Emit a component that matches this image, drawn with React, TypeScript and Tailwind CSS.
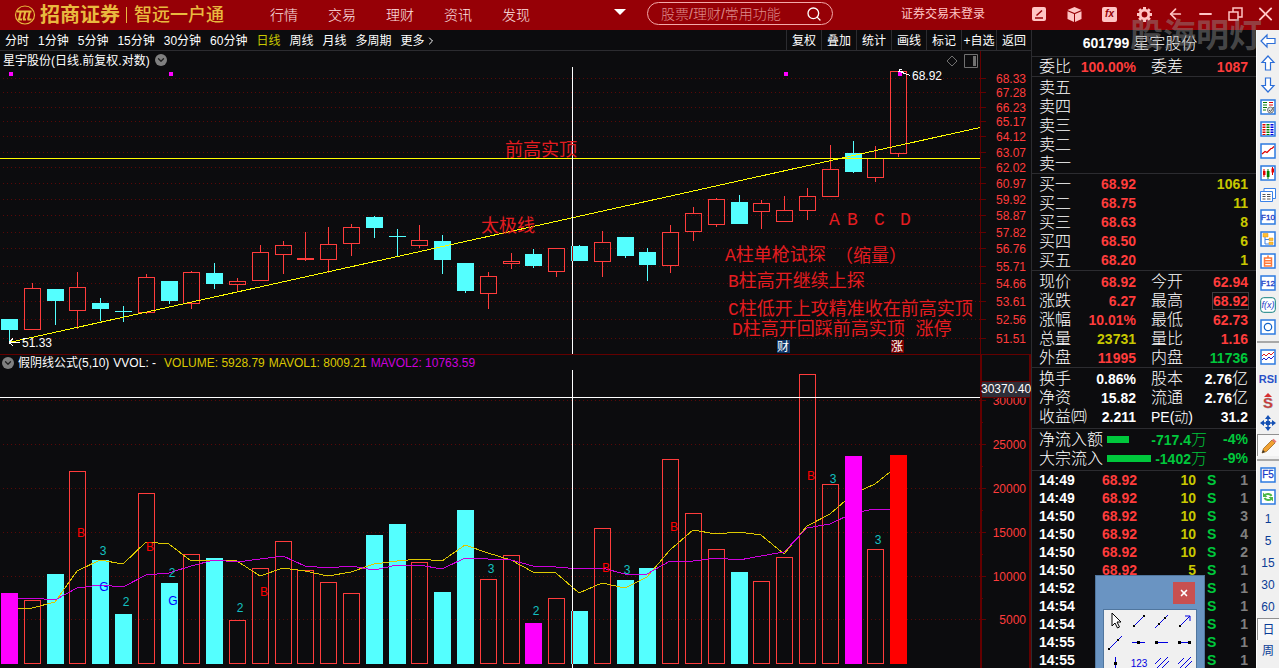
import * as React from "react";
import { Search, ArrowLeft, Minus, X, ChevronDown, ChevronRight } from "lucide-react";

type Candle = [number, number, number, number, boolean];

// high, body top, body bottom, low, rising
const candles: Candle[] = [
  [319, 319, 330, 342, false],
  [283, 288, 330, 330, true],
  [289, 289, 301, 325, false],
  [272, 287, 311, 329, true],
  [298, 303, 309, 321, false],
  [306, 311, 312, 322, false],
  [274, 277, 313, 314, true],
  [281, 281, 301, 304, false],
  [271, 272, 304, 309, true],
  [263, 273, 284, 289, false],
  [278, 281, 285, 291, true],
  [245, 252, 281, 281, true],
  [241, 245, 255, 274, true],
  [232, 258, 260, 261, true],
  [227, 244, 260, 273, true],
  [224, 227, 244, 256, true],
  [216, 217, 228, 238, false],
  [229, 236, 237, 257, false],
  [225, 240, 246, 248, true],
  [235, 241, 260, 274, false],
  [263, 263, 291, 293, false],
  [272, 276, 294, 309, true],
  [253, 261, 264, 269, true],
  [249, 254, 266, 268, false],
  [248, 248, 272, 277, true],
  [245, 246, 261, 261, false],
  [231, 242, 262, 277, true],
  [237, 237, 256, 258, false],
  [248, 252, 265, 281, false],
  [225, 232, 266, 273, true],
  [207, 213, 232, 241, true],
  [198, 199, 225, 227, true],
  [195, 202, 224, 224, false],
  [200, 203, 212, 229, true],
  [196, 210, 222, 222, true],
  [188, 196, 211, 220, true],
  [145, 169, 197, 197, true],
  [141, 153, 172, 173, false],
  [146, 158, 178, 182, true],
  [71, 71, 154, 157, true],
];

const volumes = [
  593, 600, 574, 471, 560, 614, 493, 583, 554, 558, 620, 568, 541, 570, 582, 593, 535, 524, 562, 592,
  510, 579, 555, 623, 598, 611, 528, 580, 568, 459, 513, 549, 572, 581, 557, 374, 484, 456, 549, 455,
];
const volumeFill: Record<number, string> = { 0: "#ff00ff", 23: "#ff00ff", 37: "#ff00ff", 39: "#ff0000" };

const ma1 = [
  608, 602, 571, 560, 564, 542, 544, 561, 560, 561, 576, 568, 571, 576, 572, 564, 561, 559, 561, 545,
  553, 560, 572, 573, 593, 583, 588, 577, 550, 530, 534, 532, 535, 554, 526, 514, 494, 484,
];
const ma2 = [
  598, 600, 588, 585, 587, 575, 573, 566, 560, 562, 559, 556, 566, 568, 566, 570, 565, 565, 569, 558,
  559, 560, 566, 567, 569, 568, 574, 574, 561, 561, 558, 560, 556, 552, 528, 524, 513, 509,
];

const priceAxis: [number, string][] = [
  [78, "68.33"], [92, "67.28"], [107, "66.23"], [121, "65.17"], [136, "64.12"], [152, "63.07"],
  [167, "62.02"], [183, "60.97"], [199, "59.92"], [215, "58.87"], [232, "57.82"], [248, "56.76"],
  [266, "55.71"], [283, "54.66"], [301, "53.61"], [319, "52.56"], [338, "51.51"],
];
const volumeAxis: [number, string][] = [
  [400, "30000"], [444, "25000"], [488, "20000"], [532, "15000"], [576, "10000"], [619, "5000"],
];

const marks: [number, number, string][] = [
  [81, 533, "B"], [103, 551, "3"], [104, 587, "G"], [126, 602, "2"], [150, 547, "B"], [172, 573, "2"],
  [173, 601, "G"], [240, 608, "2"], [264, 592, "B"], [491, 569, "3"], [536, 611, "2"], [606, 568, "B"],
  [627, 570, "3"], [674, 527, "B"], [811, 476, "B"], [833, 479, "3"], [878, 540, "3"],
];
const markColor: Record<string, string> = { B: "#ff0000", G: "#0000ff", "2": "#14c0c0", "3": "#14c0c0" };

const notes: [number, number, string][] = [
  [505, 156, "前高实顶"],
  [481, 232, "太极线"],
  [829, 225, "A"],
  [847, 225, "B"],
  [874, 225, "C"],
  [900, 225, "D"],
  [725, 261, "A柱单枪试探"],
  [835, 262, "（缩量）"],
  [728, 287, "B柱高开继续上探"],
  [728, 315, "C柱低开上攻精准收在前高实顶"],
  [732, 335, "D柱高开回踩前高实顶 涨停"],
];

const candleX = (i: number) => Math.round(1 + 22.8 * i);

const linePoints = (values: number[], first: number, last: number) =>
  [`18,${first}`, ...values.map((y, i) => `${candleX(i + 1) + 8},${y}`), `890,${last}`].join(" ");

const UP = "#ff3c3c";
const DOWN = "#54ffff";
const AXIS = "#640000";

const Header: React.FC = () => (
  <header className="flex h-[30px] shrink-0 items-center bg-[#960006] pl-[14px] pr-[6px] text-[#ffc4c4]">
    <svg className="h-5 w-[22px]" viewBox="0 0 22 20" fill="none" stroke="#e9b93f">
      <ellipse cx="11" cy="10" rx="9.5" ry="9" strokeWidth="1.2" />
      <path d="M3 6.5h14.5M6.8 6.5L5 14.5M11.3 6.5l-1.8 8M15.8 6.5l-1.8 8M4 14.5h4M9 14.5h3M13.5 14.5h4" strokeWidth="2" />
    </svg>
    <span className="ml-1 text-[20px] font-bold leading-6 text-[#e9b93f]">招商证券</span>
    <span className="ml-[6px] h-4 w-px bg-[#e9b93f]" />
    <span className="ml-[7px] text-[18px] font-medium leading-6 text-[#e9b93f]">智远一户通</span>
    <nav className="ml-[46px] flex gap-[30px] text-[14px] font-light text-[#ffe4e4]">
      <a href="#quotes">行情</a>
      <a href="#trade">交易</a>
      <a href="#wealth">理财</a>
      <a href="#news">资讯</a>
      <a href="#discover">发现</a>
    </nav>
    <button aria-label="更多菜单" className="-mt-[6px] ml-[84px]">
      <svg className="h-[6px] w-3" viewBox="0 0 12 6"><path d="M0 0h12L6 6z" fill="#fff" /></svg>
    </button>
    <div className="-mt-[3px] ml-[21px] flex h-[23px] w-[186px] items-center rounded-full border border-[#f3a9a9] pl-[13px] pr-[10px]">
      <input
        aria-label="搜索"
        placeholder="股票/理财/常用功能"
        className="min-w-0 flex-1 bg-transparent text-[14px] font-light leading-5 placeholder:text-[#de8c8c] focus:outline-none"
      />
      <Search className="h-4 w-4 text-white" strokeWidth={2} />
    </div>
    <span className="-mt-[3px] ml-[68px] text-[12px]">证券交易未登录</span>
    <div className="-mt-[2px] ml-auto flex items-center gap-5">
      <button aria-label="编辑">
        <svg className="h-[15px] w-[15px]" viewBox="0 0 15 15">
          <rect width="14" height="14" rx="2" fill="#ffc4c4" />
          <path d="M3 11h8M4.500 8.500L10 3.500" stroke="#960006" strokeWidth="1.500" />
        </svg>
      </button>
      <button aria-label="组件">
        <svg className="h-[15px] w-[15px]" viewBox="0 0 15 15" fill="#ffc4c4">
          <path d="M7.500 0L14.500 3L7.500 6L.5 3zM.5 4.300L7 7v8L.5 12zM14.500 4.300L8 7v8l6.500-3z" />
        </svg>
      </button>
      <button aria-label="公式" className="flex h-[15px] w-[15px] items-center justify-center rounded-[2px] bg-[#ffc4c4] text-[10px] font-bold italic leading-none text-[#960006]">
        fx
      </button>
      <button aria-label="设置">
        <svg className="h-[15px] w-[15px]" viewBox="0 0 15 15" fill="none" stroke="#ffc4c4">
          <circle cx="7.500" cy="7.500" r="4.300" strokeWidth="2.800" />
          <path d="M7.500 0v2.500M7.500 12.500V15M0 7.500h2.500M12.500 7.500H15M2.200 2.200L4 4M11 11l1.800 1.800M12.800 2.200L11 4M4 11l-1.800 1.800" strokeWidth="3" />
        </svg>
      </button>
    </div>
    <div className="-mt-[2px] ml-4 flex items-center gap-[15px]">
      <button aria-label="返回"><ArrowLeft className="h-[18px] w-[15px] scale-110" strokeWidth={2.5} /></button>
      <button aria-label="最小化"><Minus className="h-[18px] w-[15px] scale-125" strokeWidth={2.5} /></button>
      <button aria-label="还原">
        <svg className="h-[15px] w-[15px]" viewBox="0 0 15 15" fill="none" stroke="#ffc4c4" strokeWidth="1.500">
          <path d="M1 5h9v8H1zM5 5V1h9v9h-4" />
        </svg>
      </button>
      <button aria-label="关闭"><X className="h-[20px] w-[15px] scale-150" strokeWidth={2} /></button>
    </div>
  </header>
);

const periods = ["分时", "1分钟", "5分钟", "15分钟", "30分钟", "60分钟", "日线", "周线", "月线", "多周期"];
const tools = ["复权", "叠加", "统计", "画线", "标记", "+自选", "返回"];

const PeriodBar: React.FC = () => (
  <div className="flex h-[21px] items-stretch border-b border-[#2c2c30] text-[12px] text-white">
    <div className="flex items-center gap-[9px] pl-[5px] pt-[2px]">
      {periods.map((p) => (
        <button key={p} className={p === "日线" ? "text-[#c8c800]" : ""}>{p}</button>
      ))}
      <button className="flex items-center">更多<ChevronRight className="h-3 w-3" /></button>
    </div>
    <div className="ml-auto flex">
      {tools.map((t) => (
        <button key={t} className="w-[35px] whitespace-nowrap border-l border-[#2c2c30] pt-[2px]">{t}</button>
      ))}
    </div>
  </div>
);

const RoundToggle: React.FC = () => (
  <button aria-label="展开" className="flex h-3 w-3 items-center justify-center rounded-full bg-[#808080] text-[#202020]">
    <ChevronDown className="h-[10px] w-[10px]" strokeWidth={3} />
  </button>
);

const Grid: React.FC<{ rows: [number, string][] }> = ({ rows }) => (
  <g>
    {rows.map(([y, label]) => (
      <g key={label}>
        <path d={`M3 ${y}.5H980`} stroke="#5a0808" strokeDasharray="1 3" />
        <path d={`M981 ${y}.5h5`} stroke={AXIS} />
        <text x="1026" y={y + 5} textAnchor="end" fill={UP} fontSize="12">{label}</text>
      </g>
    ))}
  </g>
);

const PriceChart: React.FC = () => (
  <svg className="block h-auto w-full" viewBox="0 67 1031 288" shapeRendering="crispEdges">
    <Grid rows={priceAxis} />
    <path d="M980.5 67V355" stroke={AXIS} />
    {candles.map(([high, top, bottom, low, up], i) => {
      const x = candleX(i);
      const color = up ? UP : DOWN;
      return (
        <g key={i} stroke={color}>
          {high < top && <path d={`M${x + 8}.5 ${high}V${top}`} />}
          {low > bottom && <path d={`M${x + 8}.5 ${bottom}V${low}`} />}
          {up ? (
            <rect x={x + 0.5} y={top + 0.5} width="16" height={bottom - top - 1} fill="none" />
          ) : (
            <rect x={x} y={top} width="17" height={bottom - top} fill={color} stroke="none" />
          )}
        </g>
      );
    })}
    {[9, 169, 784, 898].map((x) => <rect key={x} x={x} y="72" width="4" height="4" fill="#ff00ff" />)}
    <path d="M9 342.5L980 127.500M0 158.500H980" stroke="#ffff00" />
    <path d="M572.5 67V355" stroke="#fff" />
    <path d="M572.5 246V261" stroke="#b00000" />
    <path d="M9 342.500h11M9 342.500l4-4M9 342.500l4 3" stroke="#fff" />
    <path d="M898 71.500h5M901 72l9 3.500M899 72v-3h3" stroke="#fff" fill="none" />
    <g fill="#fff" fontSize="12">
      <text x="22" y="347">51.33</text>
      <text x="912" y="80">68.92</text>
    </g>
    <g fill="#e41c20" fontSize="18" className="font-['Liberation_Mono','Noto_Sans_CJK_SC',monospace]">
      {notes.map(([x, y, text]) => (
        <text key={text} x={x} y={y}>{text}</text>
      ))}
    </g>
    <rect x="777" y="340" width="13" height="13" fill="#0c3468" />
    <rect x="891" y="340" width="13" height="13" fill="#780000" />
    <g fill="#fff" fontSize="12">
      <text x="777" y="351">财</text>
      <text x="891" y="351">涨</text>
    </g>
    <path d="M0 354.500H1031" stroke={AXIS} />
  </svg>
);

const VolumeChart: React.FC = () => (
  <svg className="block h-auto w-full" viewBox="0 370 1031 298" shapeRendering="crispEdges">
    <Grid rows={volumeAxis} />
    {[422, 466, 510, 554, 598].map((y) => <path key={y} d={`M981 ${y}.5h2`} stroke={AXIS} />)}
    <path d="M981 370V668M1030 370V668" stroke={AXIS} strokeWidth="2" />
    {volumes.map((y, i) => {
      const x = candleX(i);
      if (candles[i][4] && !volumeFill[i]) {
        return <rect key={i} x={x + 0.5} y={y + 0.5} width="16" height={663 - y} fill="none" stroke={UP} />;
      }
      return volumeFill[i] ? null : <rect key={i} x={x} y={y} width="17" height={664 - y} fill={DOWN} />;
    })}
    <polyline points={linePoints(ma1, 609, 472)} fill="none" stroke="#dcc800" />
    <polyline points={linePoints(ma2, 598, 509)} fill="none" stroke="#cc00dc" />
    {Object.entries(volumeFill).map(([i, fill]) => (
      <rect key={i} x={candleX(+i)} y={volumes[+i]} width="17" height={664 - volumes[+i]} fill={fill} />
    ))}
    {marks.map(([x, y, text]) => (
      <text key={x} x={x} y={y + 4} textAnchor="middle" fill={markColor[text]} fontSize="12">{text}</text>
    ))}
    <path d="M572.5 370V668M0 397.500H980" stroke="#fff" />
    <path d="M572.5 611V664" stroke="#b00000" />
    <rect x="981.5" y="381.5" width="49" height="16" fill="#2e2e38" stroke={AXIS} />
    <text x="981" y="393" fill="#fff" fontSize="12">30370.40</text>
  </svg>
);

const Charts: React.FC = () => (
  <main className="min-w-0 flex-1">
    <PeriodBar />
    <div className="flex h-4 items-center text-[12px] leading-4 text-white">
      <span className="pl-[3px] pr-[5px] pt-[3px]">星宇股份(日线.前复权.对数)</span>
      <div className="pt-[2px]"><RoundToggle /></div>
      <div className="ml-auto flex h-4 items-center gap-[6px] pr-[2px] pt-[3px]">
        <svg className="h-3 w-3" viewBox="0 0 12 12"><path d="M6 1l5 5-5 5-5-5z" fill="none" stroke="#707070" /></svg>
        <svg className="h-[14px] w-[14px]" viewBox="0 0 14 14">
          <path d="M.5.5h13v13H.5z" fill="none" stroke="#707070" />
          <path d="M9 2h3v10H9z" fill="#707070" />
        </svg>
      </div>
      <div className="h-4 w-[51px] border-l border-[#640000]" />
    </div>
    <PriceChart />
    <div className="flex h-[15px] items-center text-[12px] leading-4 text-white">
      <div className="flex flex-1 items-center gap-1 pl-[2px]">
        <RoundToggle />
        <span>假阴线公式(5,10)</span>
        <span className="pr-1">VVOL: -</span>
        <span className="text-[#dcc800]">VOLUME: 5928.79</span>
        <span className="text-[#dcc800]">MAVOL1: 8009.21</span>
        <span className="text-[#cc00dc]">MAVOL2: 10763.59</span>
      </div>
      <div className="h-4 w-[51px] border-x-2 border-[#640000]" />
    </div>
    <VolumeChart />
  </main>
);

const RED = "text-[#ff3c3c]";
const YELLOW = "text-[#c8c800]";
const GREEN = "text-[#00c83c]";

type Cell = [string, string, string];

const stats: [Cell, Cell][] = [
  [["现价", "68.92", RED], ["今开", "62.94", RED]],
  [["涨跌", "6.27", RED], ["最高", "68.92", RED]],
  [["涨幅", "10.01%", RED], ["最低", "62.73", RED]],
  [["总量", "23731", YELLOW], ["量比", "1.16", RED]],
  [["外盘", "11995", RED], ["内盘", "11736", GREEN]],
];
const finance: [Cell, Cell][] = [
  [["换手", "0.86%", ""], ["股本", "2.76亿", ""]],
  [["净资", "15.82", ""], ["流通", "2.76亿", ""]],
  [["收益㈣", "2.211", ""], ["PE(动)", "31.2", ""]],
];
const bids = [["买一", "68.92", "1061"], ["买二", "68.75", "11"], ["买三", "68.63", "8"], ["买四", "68.50", "6"], ["买五", "68.20", "1"]];
const trades = [
  ["14:49", "68.92", "10", "1"],
  ["14:49", "68.92", "10", "1"],
  ["14:50", "68.92", "10", "3"],
  ["14:50", "68.92", "10", "4"],
  ["14:50", "68.92", "10", "2"],
  ["14:50", "68.92", "5", "1"],
  ["14:52", "", "", "1"],
  ["14:54", "", "", "1"],
  ["14:54", "", "", "1"],
  ["14:55", "", "", "1"],
  ["14:55", "", "", "1"],
];

const Value: React.FC<{ text: string }> = ({ text }) => {
  const unit = /[亿万]$/.test(text) ? text.slice(-1) : "";
  return (
    <>
      {unit ? text.slice(0, -1) : text}
      {unit && <span className="text-[16px] font-light leading-none">{unit}</span>}
    </>
  );
};

const PairTable: React.FC<{ rows: [Cell, Cell][] }> = ({ rows }) => (
  <table className="w-full table-fixed">
    <tbody>
      {rows.map(([a, b]) => (
        <tr key={a[0]} className="h-[19px] leading-[18px]">
          <th className="w-[48px] whitespace-nowrap text-left text-[16px] font-light">{a[0]}</th>
          <td className={`w-[49px] text-right ${a[2]}`}>
            <div className="flex justify-end"><Value text={a[1]} /></div>
          </td>
          <th className={`w-[60px] whitespace-nowrap pl-[15px] text-left font-light ${b[0].startsWith("PE") ? "text-[14px]" : "text-[16px]"}`}>
            {b[0]}
          </th>
          <td className={`text-right ${b[2]}`}>
            <span className={b[0] === "最高" ? "outline outline-1 outline-[#3c3c40]" : ""}><Value text={b[1]} /></span>
          </td>
        </tr>
      ))}
    </tbody>
  </table>
);

const QuotePanel: React.FC = () => (
  <aside className="w-[225px] shrink-0 overflow-hidden border-l border-[#2c2c30] text-[14px] font-bold leading-[19px] text-white">
    <h1 className="flex h-[27px] items-center justify-center gap-1 border-b border-[#2c2c30] pr-2 text-[14px]">
      601799<span className="text-[16px] font-light">星宇股份</span>
    </h1>
    <div className="h-5 border-b border-[#2c2c30] pl-[7px] pr-2">
      <PairTable rows={[[["委比", "100.00%", RED], ["委差", "1087", RED]]]} />
    </div>
    <ul className="border-b border-[#2c2c30] pl-[7px] pt-px text-[16px] font-light">
      {["卖五", "卖四", "卖三", "卖二", "卖一"].map((s) => <li key={s}>{s}</li>)}
    </ul>
    <div className="border-b border-[#2c2c30] pl-[7px] pr-2 pt-px">
      <table className="w-full table-fixed">
        <tbody>
          {bids.map(([label, price, count]) => (
            <tr key={label} className="h-[19px]">
              <th className="w-[48px] text-left text-[16px] font-light">{label}</th>
              <td className={`w-[49px] text-right ${RED}`}>{price}</td>
              <td className={`text-right ${YELLOW}`}>{count}</td>
            </tr>
          ))}
        </tbody>
      </table>
    </div>
    <div className="border-b border-[#2c2c30] pl-[7px] pr-2 pt-px">
      <PairTable rows={stats} />
    </div>
    <div className="h-[61px] border-b border-[#2c2c30] pl-[7px] pr-2 pt-px">
      <PairTable rows={finance} />
    </div>
    <div className={`h-[42px] border-b border-[#2c2c30] pl-[7px] pr-2 pt-px ${GREEN}`}>
      {[["净流入额", "-717.4", "-4%"], ["大宗流入", "-1402", "-9%"]].map(([label, amount, pct], i) => (
        <div key={label} className="flex h-[19px] items-center">
          <span className="w-[68px] text-[16px] font-light text-white">{label}</span>
          <span className={`h-[7px] bg-[#00c83c] ${i ? "w-[44px]" : "w-[22px]"}`} />
          <span className="ml-auto leading-[18px]"><Value text={amount + "万"} /></span>
          <span className="w-[41px] text-right">{pct}</span>
        </div>
      ))}
    </div>
    <div className="pl-[7px] pr-2">
      <table className="w-full table-fixed leading-[18px]">
        <tbody>
          {trades.map(([time, price, count, n], i) => (
            <tr key={i} className="h-[18px]">
              <td className="w-[63px]">{time}</td>
              <td className={`w-[38px] ${RED}`}>{price}</td>
              <td className={`w-[56px] text-right ${YELLOW}`}>{count}</td>
              <td className={`w-[22px] pl-[11px] ${GREEN}`}>S</td>
              <td className="text-right text-[#808080]">{n}</td>
            </tr>
          ))}
        </tbody>
      </table>
    </div>
  </aside>
);

const Framed: React.FC<{ children?: React.ReactNode }> = ({ children }) => (
  <svg className="h-4 w-4" viewBox="0 0 16 16">
    <rect x="1" y="1" width="14" height="14" fill="#fff" stroke="#2c7ae0" strokeWidth="1.500" />
    {children}
  </svg>
);

const FText: React.FC<{ text: string }> = ({ text }) => (
  <Framed><text x="8" y="11" textAnchor="middle" fontSize={text.length > 2 ? 8 : 10} fill="#1c3cc8" stroke="#1c3cc8" strokeWidth=".3">{text}</text></Framed>
);

const Arrow: React.FC<{ d: string }> = ({ d }) => (
  <svg className="h-4 w-4" viewBox="0 0 16 16" fill="#fff" stroke="#2c6ed8" strokeWidth="1.200"><path d={d} /></svg>
);

const sideIcons: [string, React.ReactNode][] = [
  ["后退", <Arrow d="M1 8L7 2V5.500h8v5H7V14z" />],
  ["上翻", <Arrow d="M8 1L14 7.500h-3.500v7.500h-5V7.500H2z" />],
  ["下翻", <Arrow d="M8 15L14 8.500h-3.500V1h-5v7.500H2z" />],
  ["列表", <Framed><path d="M3 3.500h4M3 6h4M3 8.500h4M3 11h3" stroke="#0a7a0a" /><path d="M9 3.500h4M9 6h4" stroke="#e00000" /><circle cx="10.500" cy="11" r="3" fill="#ddd" stroke="#777" /><path d="M9 11l1.500 1.500L14 8" fill="none" stroke="#555" /></Framed>],
  ["报价", <Framed><path d="M4 3v11" stroke="#e00000" strokeWidth="3" strokeDasharray="1.500 1" /><path d="M8 3v11" stroke="#008000" strokeWidth="3" strokeDasharray="1.500 1" /><path d="M12 3v11" stroke="#0000e0" strokeWidth="3" strokeDasharray="1.500 1" /></Framed>],
  ["走势", <Framed><path d="M2 11l3-2.500 2 1 4-4h1l2-2" fill="none" stroke="#e00000" strokeWidth="1.200" /></Framed>],
  ["K线", <Framed><path d="M4 4v8M12.500 2v8" stroke="#e00000" /><path d="M3 6h2.500v4H3zM11.500 3.500H14v4h-2.500z" fill="#e00000" /><path d="M8 4v10" stroke="#008000" /><path d="M6.800 6h2.700v6H6.800z" fill="#008000" /></Framed>],
  ["资讯", <svg className="h-4 w-4" viewBox="0 0 16 16" fill="#fff" stroke="#3c82e8"><path d="M4 1.500h11.500v10H4z" /><path d="M.5 4.500h12v10H.5z" /><path d="M2.500 7.500h3M7 7.500h3.500M2.500 9.500h3M7 9.500h3.500M2.500 12h3M7 12h3.500" stroke="#555" /></svg>],
  ["F10", <FText text="F10" />],
  ["板块", <Framed><path d="M5 6v7h4M5 8.500h4" fill="none" stroke="#3c82e8" /><path d="M3 2.500h5v3.500H3zM9 7h4v2.500H9zM9 11h4v2.500H9z" fill="#ffc030" stroke="#e09010" strokeWidth=".5" /></Framed>],
  ["自选", <Framed><path d="M4.500 5h7v8h-7zM4.500 7.700h7M4.500 10.300h7M8 2.500V5" fill="none" stroke="#ff7838" strokeWidth="1.500" /></Framed>],
  ["F12", <FText text="F12" />],
  ["公式", <svg className="h-4 w-4" viewBox="0 0 16 16"><rect x=".7" y=".7" width="14.600" height="14.600" rx="3" fill="#fff" stroke="#108080" /><text x="8" y="11" textAnchor="middle" fontSize="9" fontStyle="italic" fill="#1c3cc8">f(x)</text></svg>],
  ["圆形", <Framed><circle cx="8" cy="8" r="3.700" fill="none" stroke="#1464c8" strokeWidth="1.200" /></Framed>],
];

const sideIcons2: [string, React.ReactNode][] = [
  ["指标", <Framed><path d="M2 7l2-2 2 2 3-3 2 2 3-3" fill="none" stroke="#e02020" /><path d="M2 11l2-2 2 2 3-3 2 2 3-3" fill="none" stroke="#2020d0" /></Framed>],
  ["RSI", <span className="text-[11px] font-bold text-[#2850c8]">RSI</span>],
  ["资金", <svg className="h-4 w-4" viewBox="0 0 16 16"><path d="M8 0l4 4H4z" fill="#d83030" /><text x="8" y="15" textAnchor="middle" fontSize="15" fontWeight="700" fill="#d83030" stroke="#888" strokeWidth=".4">S</text></svg>],
  ["移动", <svg className="h-4 w-4" viewBox="0 0 16 16" fill="#1450b4"><path d="M8 0l3 4H5zM8 16l3-4H5zM0 8l4-3v6zM16 8l-4-3v6zM6 6h4v4H6z" /><path d="M8 3v10M3 8h10" stroke="#1450b4" strokeWidth="1.500" /></svg>],
];

const SideBar: React.FC = () => (
  <div className="flex w-[23px] shrink-0 flex-col border-l border-white bg-[#f0f0f0] text-[12px] text-[#0a3c96]">
    {sideIcons.map(([label, icon]) => (
      <button key={label} aria-label={label} className="flex h-[22px] items-center justify-center">{icon}</button>
    ))}
    <hr className="my-[3px] border-t-2 border-[#a8a8a8]" />
    {sideIcons2.map(([label, icon]) => (
      <button key={label} aria-label={label} className="flex h-[22px] items-center justify-center">{icon}</button>
    ))}
    <button aria-label="画线工具" className="flex h-[22px] items-center justify-center border-l border-t border-[#909090] bg-[#f8f8f8]">
      <svg className="h-4 w-4" viewBox="0 0 16 16">
        <path d="M1 15l1.500-4.500L11 2l3 3-8.500 8.500z" fill="#f0a030" stroke="#8c5a14" strokeWidth=".7" />
        <path d="M11 2l1.500-1.300L15.500 3.500 14 5z" fill="#e87878" />
        <path d="M1 15l1-3 2 2z" fill="#333" />
      </svg>
    </button>
    <hr className="my-[3px] border-t-2 border-[#a8a8a8]" />
    <button aria-label="F5" className="flex h-[22px] items-center justify-center"><FText text="F5" /></button>
    <button aria-label="刷新" className="flex h-[22px] items-center justify-center">
      <Framed>
        <path d="M4.500 6.500a4 3.500 0 0 1 7 .5M11.500 9.500a4 3.500 0 0 1-7-.5" fill="none" stroke="#4cb848" strokeWidth="2" />
        <path d="M3 3.500v4.500h4.500zM13 12.500V8H8.500z" fill="#4cb848" />
      </Framed>
    </button>
    {["1", "5", "15", "30", "60"].map((m) => <button key={m} className="h-[22px]">{m}</button>)}
    <button className="h-[22px] border-l border-t border-[#909090] bg-[#f8f8f8]">日</button>
    <button className="h-[22px]">周</button>
  </div>
);

const drawTools: [string, React.ReactNode][] = [
  ["选择", <path d="M6 1v13l3-3 2.500 5 2-1-2.500-5h4z" fill="#fff" stroke="#000" />],
  ["线段", <><path d="M5 14L15 4" /><path d="M4 13h2v2H4zM14 3h2v2h-2z" fill="#000" stroke="none" /></>],
  ["直线", <><path d="M3 16L16 3" /><path d="M6 11h2v2H6zM12 5h2v2h-2z" fill="#000" stroke="none" /></>],
  ["箭头", <><path d="M5 14L15 4M10 4h5v5" /><path d="M4 13h2v2H4z" fill="#000" stroke="none" /></>],
  ["射线", <><path d="M3 16L16 3" /><path d="M2 15h2v2H2zM11 6h2v2h-2z" fill="#000" stroke="none" /></>],
  ["水平线", <><path d="M3 9.500h13" /><path d="M8 8h3v3H8z" fill="#000" stroke="none" /></>],
  ["水平射线", <><path d="M4 9.500h12" /><path d="M3 8h3v3H3z" fill="#000" stroke="none" /></>],
  ["水平线段", <><path d="M4 9.500h12" /><path d="M3 8h3v3H3zM13 8h3v3h-3z" fill="#000" stroke="none" /></>],
  ["垂直线", <><path d="M9.500 3v14" /><path d="M8 8h3v3H8z" fill="#000" stroke="none" /></>],
  ["数浪", <text x="10" y="13" textAnchor="middle" fontSize="10" fill="#0000e0" stroke="none">123</text>],
  ["平行线", <path d="M3 10L9 4M3 16L16 3M9 15L17 7" />],
  ["通道线", <path d="M3 10L9 4M3 16L16 3M9 15L17 7" />],
];

const DrawPalette: React.FC = () => (
  <div role="dialog" aria-label="画线" className="absolute right-[74px] top-[575px] w-[110px] border border-[#50769e] bg-[#6a94c2] px-[7px] pt-[6px]">
    <div className="flex justify-end pr-[2px]">
      <button aria-label="关闭" className="flex h-[22px] w-[22px] items-center justify-center bg-[#c85050] text-white">
        <X className="h-[10px] w-[10px]" strokeWidth={4} />
      </button>
    </div>
    <div className="mt-[5px] grid grid-cols-4 border border-[#50769e] bg-[#f0f0f0] pt-px">
      {drawTools.map(([label, icon]) => (
        <button key={label} aria-label={label} className="flex h-[21px] items-center justify-center">
          <svg className="h-5 w-5" viewBox="0 0 20 20" fill="none" stroke="#0000e0">{icon}</svg>
        </button>
      ))}
    </div>
  </div>
);

const App: React.FC = () => {
  return (
    <div className="relative flex h-screen flex-col overflow-hidden bg-[#0c0c0e] font-['Liberation_Sans','Noto_Sans_CJK_SC',sans-serif]">
      <Header />
      <div className="flex min-h-0 flex-1">
        <Charts />
        <QuotePanel />
        <SideBar />
      </div>
      <DrawPalette />
      <div className="pointer-events-none absolute right-[17px] top-[16px] text-[33px] font-bold leading-10 text-[#909090]/45">
        股海明灯
      </div>
    </div>
  );
};

export default App;
